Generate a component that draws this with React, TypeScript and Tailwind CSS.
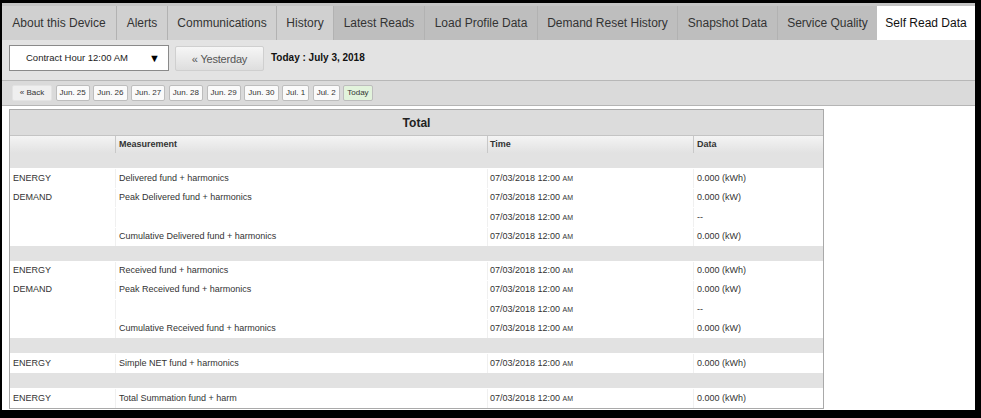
import React from "react";

const tabs = [
  { label: "About this Device", w: "w-[114px]", tone: "light" },
  { label: "Alerts", w: "w-[51px]", tone: "light" },
  { label: "Communications", w: "w-[109px]", tone: "light" },
  { label: "History", w: "w-[57px]", tone: "light" },
  { label: "Latest Reads", w: "w-[91px]", tone: "dark" },
  { label: "Load Profile Data", w: "w-[113px]", tone: "dark" },
  { label: "Demand Reset History", w: "w-[140px]", tone: "dark" },
  { label: "Snapshot Data", w: "w-[100px]", tone: "dark" },
  { label: "Service Quality", w: "w-[100px]", tone: "dark" },
  { label: "Self Read Data", w: "w-[98px]", tone: "active" },
];

const days = ["Jun. 25", "Jun. 26", "Jun. 27", "Jun. 28", "Jun. 29", "Jun. 30", "Jul. 1", "Jul. 2"];

type Row = { type?: string; name?: string; data: string; h: string } | "gap";

const rows: Row[] = [
  "gap",
  { type: "ENERGY", name: "Delivered fund + harmonics", data: "0.000 (kWh)", h: "h-[20px]" },
  { type: "DEMAND", name: "Peak Delivered fund + harmonics", data: "0.000 (kW)", h: "h-[19px]" },
  { data: "--", h: "h-[20px]" },
  { name: "Cumulative Delivered fund + harmonics", data: "0.000 (kW)", h: "h-[19px]" },
  "gap",
  { type: "ENERGY", name: "Received fund + harmonics", data: "0.000 (kWh)", h: "h-[19px]" },
  { type: "DEMAND", name: "Peak Received fund + harmonics", data: "0.000 (kW)", h: "h-[19px]" },
  { data: "--", h: "h-[20px]" },
  { name: "Cumulative Received fund + harmonics", data: "0.000 (kW)", h: "h-[19px]" },
  "gap",
  { type: "ENERGY", name: "Simple NET fund + harmonics", data: "0.000 (kWh)", h: "h-[20px]" },
  "gap",
  { type: "ENERGY", name: "Total Summation fund + harm", data: "0.000 (kWh)", h: "h-[20px]" },
];

function Time() {
  return (
    <span>
      07/03/2018 12:00 <span className="text-[7px]">AM</span>
    </span>
  );
}

export default function App() {
  return (
    <div className="w-[981px] h-[418px] bg-black pt-[3px] pl-[2px] pr-[6px] pb-[8px] overflow-hidden font-['Liberation_Sans',Arial,sans-serif] text-[#333]">
      <div className="h-full bg-white flex flex-col">
        {/* tabs */}
        <div className="h-[37px] bg-[#c4c4c4] pt-[3px] flex shrink-0">
          {tabs.map((t, i) => (
            <div
              key={t.label}
              className={
                "h-full flex items-center justify-center text-[12px] " +
                t.w +
                (i > 0 && t.tone !== "active" ? " border-l border-[#b2b2b2]" : "") +
                (t.tone === "light" ? " bg-[#d0d0d0]" : t.tone === "dark" ? " bg-[#bebebe]" : " bg-white text-[#111]")
              }
            >
              {t.label}
            </div>
          ))}
        </div>

        {/* controls */}
        <div className="h-[40px] bg-[#e3e3e3] flex items-start pt-[5px] pl-[7px] shrink-0">
          <div className="w-[160px] h-[26px] bg-white border border-[#8a8a8a] flex items-center pl-[16px] pr-[8px] justify-between">
            <span className="text-[9.5px] text-[#222]">Contract Hour 12:00 AM</span>
            <span className="text-[11px] text-black leading-none">▼</span>
          </div>
          <div className="ml-[6px] mt-[1px] w-[89px] h-[25px] rounded-[2px] border border-[#cfcfcf] bg-gradient-to-b from-[#f6f6f6] to-[#dedede] flex items-center justify-center pt-[2px] text-[11px] text-[#555] tracking-[-0.2px]">
            « Yesterday
          </div>
          <div className="ml-[7px] mt-[5px] text-[10px] font-bold text-[#111]">Today : July 3, 2018</div>
        </div>
        <div className="h-px bg-[#b7b7b7] shrink-0" />

        {/* day buttons */}
        <div className="h-[25px] bg-[#dadada] border-b border-[#b5b5b5] flex items-center gap-[3.5px] pl-[10px] shrink-0">
          <div className="h-[16px] w-[40px] justify-center flex items-center bg-[#efefef] border border-[#e3e3e3] rounded-[2px] text-[8px] text-[#333]">
            « Back
          </div>
          {days.map((d) => (
            <div
              key={d}
              className="h-[16px] px-[3px] flex items-center bg-[#fafafa] border border-[#bdbdbd] rounded-[2px] text-[8px] text-[#333]"
            >
              {d}
            </div>
          ))}
          <div className="h-[16px] px-[3px] flex items-center bg-[#e2f3dc] border border-[#bdbdbd] rounded-[2px] text-[8px] text-[#333]">
            Today
          </div>
        </div>

        {/* table */}
        <div className="pt-[3px] pl-[7px] shrink-0">
          <div className="w-[815px] border border-[#a9a9a9]">
            <div className="h-[25px] bg-[#dcdcdc] flex items-center justify-center text-[12px] font-bold text-[#222]">
              Total
            </div>
            <div className="grid grid-cols-[105px_372px_206px_1fr] h-[18px] bg-gradient-to-b from-[#f4f4f4] to-[#e2e2e2] border-t border-[#c4c4c4] text-[9px] font-bold text-[#333]">
              <div />
              <div className="border-l border-[#c8c8c8] pl-[3px] flex items-center">Measurement</div>
              <div className="border-l border-[#c8c8c8] pl-[2px] flex items-center">Time</div>
              <div className="border-l border-[#c8c8c8] pl-[3px] flex items-center">Data</div>
            </div>
            {rows.map((r, i) =>
              r === "gap" ? (
                <div key={i} className="h-[15px] bg-[#e2e2e2]" />
              ) : (
                <div key={i} className={"grid grid-cols-[105px_372px_206px_1fr] pt-[1px] text-[9px] text-[#333] " + r.h}>
                  <div className="pl-[3px] flex items-center">{r.type}</div>
                  <div className="border-l border-[#f0f0f0] pl-[3px] flex items-center">{r.name}</div>
                  <div className="border-l border-[#f0f0f0] pl-[2px] flex items-center">
                    <Time />
                  </div>
                  <div className="border-l border-[#f0f0f0] pl-[3px] flex items-center">{r.data}</div>
                </div>
              )
            )}
          </div>
        </div>
      </div>
    </div>
  );
}
